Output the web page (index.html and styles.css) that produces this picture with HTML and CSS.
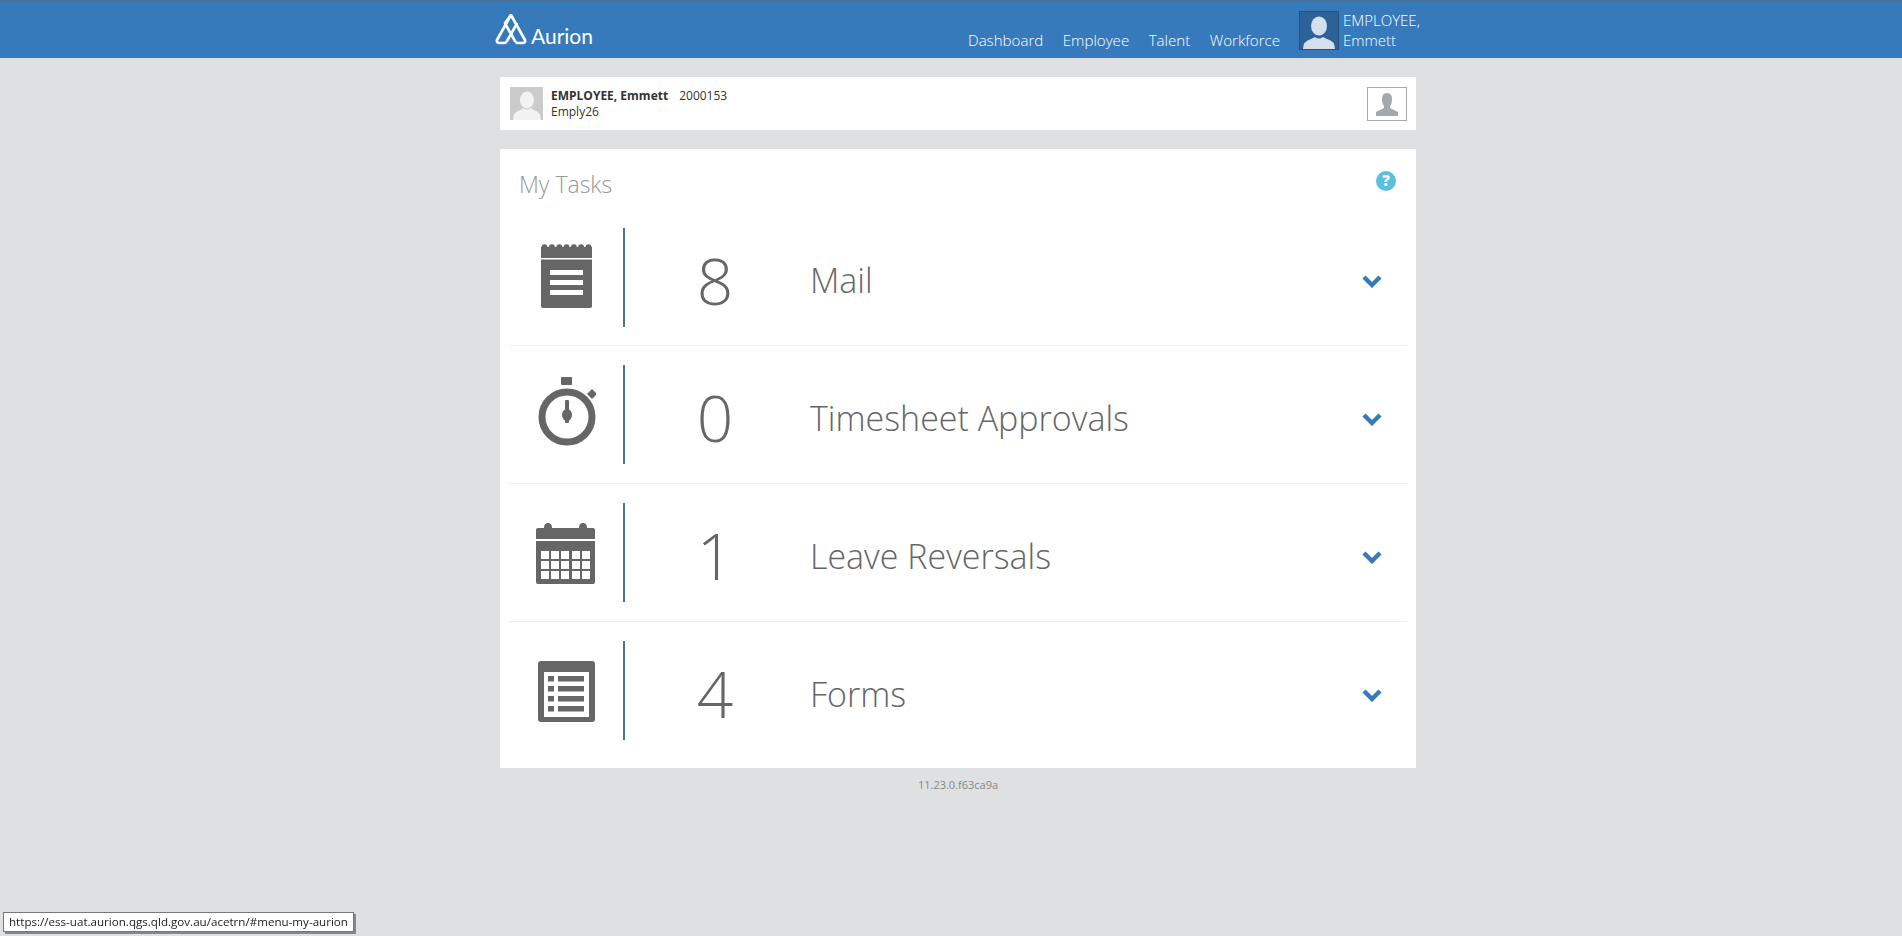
FILE: index.html
```html
<!DOCTYPE html>
<html lang="en">
  <head>
    <meta charset="UTF-8" />
    <meta name="viewport" content="width=device-width, initial-scale=1.0" />
    <title>My Tasks</title>
    <link rel="stylesheet" href="styles.css">
  </head>
  <body>
    <header class="topbar">
      <div class="topbar-inner">
        <a class="logo" href="#">
          <svg class="logo-mark" width="32" height="31" viewBox="0 0 32 31" fill="none" stroke="#fff" stroke-width="2.6" stroke-linejoin="round">
            <path d="M16 1 L30 26 Q31 29 27 29 L23 29 Q21 29 20 27 L12 13 L10 9 Z" />
            <path d="M16 1 L2 26 Q1 29 5 29 L9 29 Q11 29 12 27 L20 13 L22 9" />
          </svg>
          <span class="logo-text">Aurion</span>
        </a>
        <nav class="nav">
          <a href="#">Dashboard</a>
          <a href="#">Employee</a>
          <a href="#">Talent</a>
          <a href="#">Workforce</a>
        </nav>
        <div class="user">
          <svg class="user-photo" width="40" height="39" viewBox="0 0 40 39">
            <rect x="0.5" y="0.5" width="39" height="38" fill="#2d6299" stroke="#27527f" />
            <ellipse cx="20" cy="15" rx="8" ry="9.5" fill="#d5e0ec" />
            <path d="M4 38 Q4 30 12 28 L16 26 Q20 29 24 26 L28 28 Q36 30 36 38 Z" fill="#d5e0ec" />
          </svg>
          <span class="user-name">EMPLOYEE,<br />Emmett</span>
        </div>
      </div>
    </header>

    <main class="content">
      <section class="info-card">
        <svg class="info-photo" width="33" height="33" viewBox="0 0 33 33">
          <rect width="33" height="33" fill="#cbcbcb" />
          <ellipse cx="17" cy="13" rx="7" ry="8.5" fill="#f2f2f2" />
          <path d="M3 33 Q3 25 10 23 L13 21 Q17 24 21 21 L24 23 Q31 25 31 33 Z" fill="#f2f2f2" />
        </svg>
        <div class="info-text">
          <div><strong>EMPLOYEE, Emmett</strong><span class="info-id">2000153</span></div>
          <div>Emply26</div>
        </div>
        <button class="info-button">
          <svg width="24" height="24" viewBox="0 0 24 24">
            <path d="M12 1 Q17 1 17 7 Q17 12 15 14 L15 16 L23 20 L23 24 L1 24 L1 20 L9 16 L9 14 Q7 12 7 7 Q7 1 12 1 Z" fill="#a3a8ac" />
          </svg>
        </button>
      </section>

      <section class="tasks-card">
        <div class="tasks-head">
          <h1>My Tasks</h1>
          <svg class="help" width="20" height="20" viewBox="0 0 20 20">
            <circle cx="10" cy="10" r="10" fill="#5bc0de" />
            <text x="10" y="15" text-anchor="middle" class="help-mark">?</text>
          </svg>
        </div>

        <div class="task-row">
          <div class="task-icon">
            <svg width="60" height="99" viewBox="0 0 60 99">
              <g transform="translate(1 16)" fill="#666">
                <rect x="4" y="3" width="51" height="11" />
                <circle cx="7.5" cy="3.2" r="3" /><circle cx="14.9" cy="3.2" r="3" /><circle cx="22.3" cy="3.2" r="3" /><circle cx="29.5" cy="3.2" r="3" /><circle cx="36.8" cy="3.2" r="3" /><circle cx="44.1" cy="3.2" r="3" /><circle cx="51.5" cy="3.2" r="3" />
                <path d="M4 15.5 L55 15.5 L55 62 Q55 64 53 64 L6 64 Q4 64 4 62 Z" />
                <rect x="13" y="26" width="33" height="5" fill="#fff" />
                <rect x="13" y="36" width="33" height="5" fill="#fff" />
                <rect x="13" y="46" width="33" height="5" fill="#fff" />
              </g>
            </svg>
          </div>
          <div class="task-count">8</div>
          <div class="task-label">Mail</div>
          <svg class="chevron" width="22" height="14" viewBox="0 0 22 14"><path d="M3 3 L11 11 L19 3" fill="none" stroke="#377abc" stroke-width="4.4" /></svg>
        </div>

        <div class="task-row">
          <div class="task-icon">
            <svg width="60" height="99" viewBox="0 0 60 99">
              <g transform="translate(1 12)" fill="#666">
                <rect x="24" y="0" width="11" height="8" rx="1" />
                <path d="M55 12 L60 17 L55 22 L50 17 Z" />
                <circle cx="30" cy="40" r="25" fill="none" stroke="#666" stroke-width="7" />
                <rect x="28" y="23" width="4" height="23" rx="1" />
                <ellipse cx="30" cy="38" rx="5" ry="6" />
              </g>
            </svg>
          </div>
          <div class="task-count">0</div>
          <div class="task-label">Timesheet Approvals</div>
          <svg class="chevron" width="22" height="14" viewBox="0 0 22 14"><path d="M3 3 L11 11 L19 3" fill="none" stroke="#377abc" stroke-width="4.4" /></svg>
        </div>

        <div class="task-row">
          <div class="task-icon">
            <svg width="60" height="99" viewBox="0 0 60 99">
              <g transform="translate(0 19)" fill="#666">
                <path d="M8 6 Q8 1 12 1 Q16 1 16 6 L43 6 Q43 1 47 1 Q51 1 51 6 L57 6 Q59 6 59 8 L59 17 L0 17 L0 8 Q0 6 2 6 Z" />
                <path d="M0 19 L59 19 L59 60 Q59 62 57 62 L2 62 Q0 62 0 60 Z" />
                <g fill="#fff">
                  <rect x="5" y="29" width="8" height="8" /><rect x="15" y="29" width="8" height="8" /><rect x="25" y="29" width="8" height="8" /><rect x="36" y="29" width="8" height="8" /><rect x="46" y="29" width="8" height="8" />
                  <rect x="5" y="39" width="8" height="8" /><rect x="15" y="39" width="8" height="8" /><rect x="25" y="39" width="8" height="8" /><rect x="36" y="39" width="8" height="8" /><rect x="46" y="39" width="8" height="8" />
                  <rect x="5" y="49" width="8" height="8" /><rect x="15" y="49" width="8" height="8" /><rect x="25" y="49" width="8" height="8" /><rect x="36" y="49" width="8" height="8" /><rect x="46" y="49" width="8" height="8" />
                </g>
              </g>
            </svg>
          </div>
          <div class="task-count">1</div>
          <div class="task-label">Leave Reversals</div>
          <svg class="chevron" width="22" height="14" viewBox="0 0 22 14"><path d="M3 3 L11 11 L19 3" fill="none" stroke="#377abc" stroke-width="4.4" /></svg>
        </div>

        <div class="task-row">
          <div class="task-icon">
            <svg width="60" height="99" viewBox="0 0 60 99">
              <g transform="translate(0 19)" fill="#666">
                <rect x="2" y="1" width="57" height="61" rx="3" />
                <rect x="8" y="12" width="45" height="45" fill="#fff" />
                <rect x="12" y="16" width="6" height="5.5" /><rect x="22" y="16" width="26" height="5.5" />
                <rect x="12" y="26" width="6" height="5.5" /><rect x="22" y="26" width="26" height="5.5" />
                <rect x="12" y="36" width="6" height="5.5" /><rect x="22" y="36" width="26" height="5.5" />
                <rect x="12" y="46" width="6" height="5.5" /><rect x="22" y="46" width="26" height="5.5" />
              </g>
            </svg>
          </div>
          <div class="task-count">4</div>
          <div class="task-label">Forms</div>
          <svg class="chevron" width="22" height="14" viewBox="0 0 22 14"><path d="M3 3 L11 11 L19 3" fill="none" stroke="#377abc" stroke-width="4.4" /></svg>
        </div>
      </section>

      <div class="version">11.23.0.f63ca9a</div>
    </main>

    <div class="status-tip">https://ess-uat.aurion.qgs.qld.gov.au/acetrn/#menu-my-aurion</div>
  </body>
</html>
```

FILE: styles.css
```css
html,
body {
  height: 100%;
}
body {
  margin: 0;
  background-color: #dee0e2;
  font-family: "Open Sans", Arial, sans-serif;
  color: #333;
  overflow: hidden;
}
a {
  color: inherit;
  text-decoration: none;
}
.topbar {
  height: 56px;
  background-color: #377abc;
  border-top: 2px solid #4a7396;
  color: #fff;
}
.topbar-inner {
  width: 916px;
  margin-left: 500px;
  display: flex;
  height: 100%;
}
.logo {
  display: flex;
  align-items: flex-end;
  gap: 4px;
  margin-left: -5px;
  padding-bottom: 13px;
}
.logo-text {
  margin-bottom: -2px;
  font-family: Lato, sans-serif;
  font-size: 21px;
  line-height: 22px;
  font-weight: 400;
}
.nav {
  display: flex;
  gap: 19.5px;
  margin-left: auto;
  margin-top: 27px;
  font-size: 15.1px;
  font-weight: 300;
  line-height: 22px;
}
.user {
  display: flex;
  gap: 4px;
  margin-left: 19px;
  margin-right: -5px;
  margin-top: 9px;
  font-size: 15px;
  font-weight: 300;
  line-height: 20px;
}
.user-name {
  margin-top: -1px;
  width: 78px;
}
.content {
  width: 916px;
  margin-left: 500px;
}
.info-card {
  display: flex;
  align-items: flex-start;
  height: 53px;
  margin-top: 19px;
  padding: 10px 9px 0 10px;
  box-sizing: border-box;
  background-color: #fff;
}
.info-photo {
  flex: none;
}
.info-text {
  margin-left: 8px;
  margin-top: 1px;
  font-size: 12px;
  line-height: 16px;
  font-weight: 400;
  color: #333;
}
.info-text strong {
  font-weight: 700;
}
.info-id {
  margin-left: 11px;
}
.info-button {
  margin-left: auto;
  width: 40px;
  height: 34px;
  padding: 0;
  border: 1px solid #aaa;
  background-color: #fff;
  display: flex;
  align-items: center;
  justify-content: center;
}
.tasks-card {
  margin-top: 19px;
  padding: 0 9px 9px;
  height: 619px;
  box-sizing: border-box;
  background-color: #fff;
}
.tasks-head {
  display: flex;
  justify-content: space-between;
  height: 60px;
}
.tasks-head h1 {
  margin: 18px 0 0 10px;
  font-size: 23px;
  line-height: 34px;
  font-weight: 300;
  color: #999;
}
.help {
  margin: 22px 11px 0 0;
}
.help-mark {
  font-family: "Open Sans", sans-serif;
  font-size: 15px;
  font-weight: 800;
  fill: #fff;
}
.task-row {
  display: flex;
  align-items: center;
  height: 137px;
  border-bottom: 1px solid #eceeef;
}
.tasks-head + .task-row {
  height: 136px;
}
.task-row:last-child {
  border-bottom: none;
}
.task-icon {
  flex: none;
  display: flex;
  justify-content: center;
  width: 114px;
  height: 99px;
  border-right: 2px solid #4a7396;
}
.task-count {
  flex: none;
  width: 180px;
  padding-top: 6px;
  text-align: center;
  font-size: 64px;
  font-weight: 300;
  line-height: 99px;
  color: #666;
}
.task-label {
  flex: 1;
  margin-left: 5px;
  padding-top: 6px;
  font-size: 34px;
  font-weight: 300;
  line-height: 50px;
  color: #666;
}
.chevron {
  flex: none;
  margin-top: 8px;
  margin-right: 24px;
}
.version {
  margin-top: 9px;
  text-align: center;
  font-size: 11px;
  font-weight: 400;
  line-height: 15px;
  color: #888;
}
.status-tip {
  position: fixed;
  left: 3px;
  bottom: 4px;
  padding: 1px 5px 2px;
  border: 1px solid #777;
  background-color: #fff;
  box-shadow: 2px 2px 0 #888;
  font-size: 11.6px;
  line-height: 15px;
  color: #222;
}
```
